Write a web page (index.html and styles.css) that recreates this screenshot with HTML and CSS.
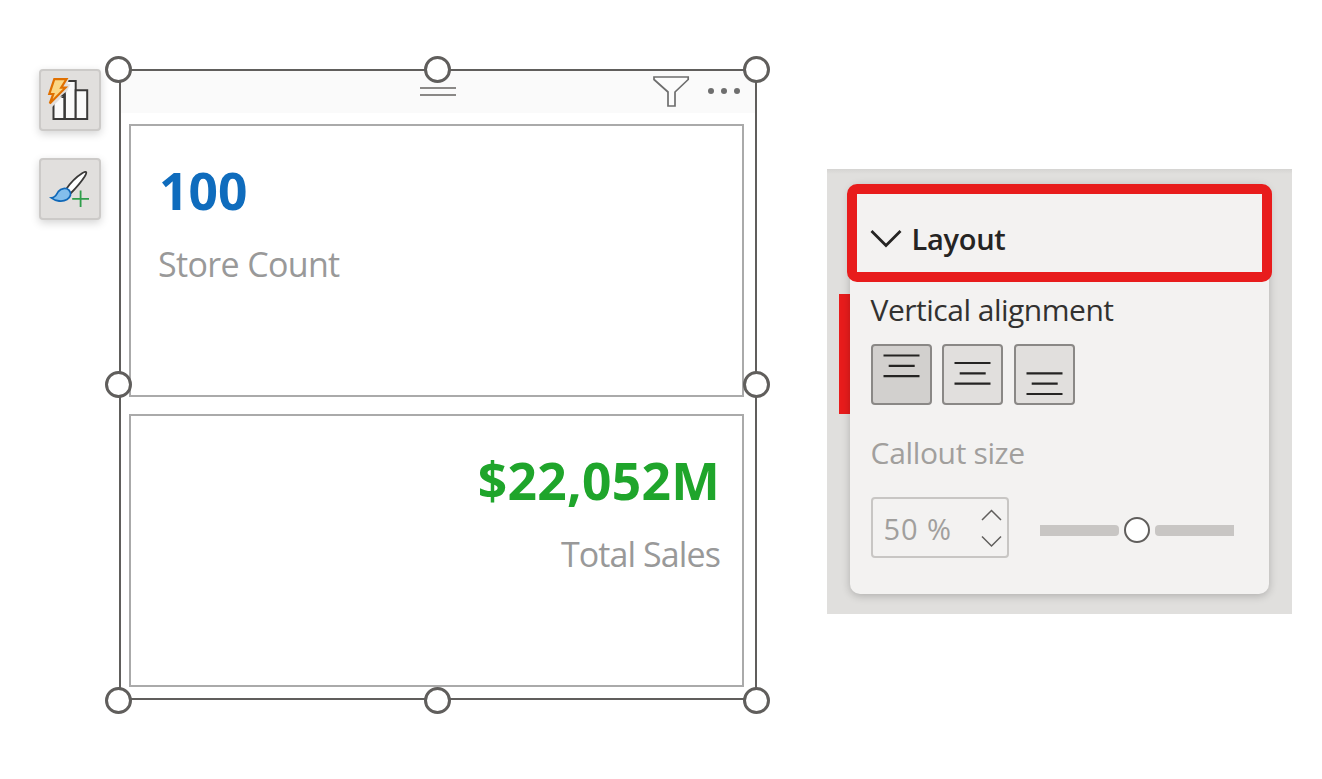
FILE: index.html
```
<!DOCTYPE html>
<html lang="en">
<head>
<meta charset="utf-8">
<title>Card layout</title>
<link rel="stylesheet" href="styles.css">
</head>
<body>
<main class="page">
  <nav class="tools">
    <button class="tool" aria-label="Build visual">
      <svg width="58" height="58" viewBox="41 71 58 58">
        <g fill="#fafafa" stroke="#3b3a39" stroke-width="2">
          <path d="M53.5 97h11.2v22H53.5z"/><path d="M64.700 81h11v38h-11z"/><path d="M75.700 90.300h11.500V119H75.700z"/>
        </g>
        <path d="M50 74h18.500v6.500l-1 3.500h3l-4 8.500-15 15-3-3z" fill="#e1dfdd"/>
        <path d="M65.700 92v26h-2V96.500h-3.500z" fill="#3b3a39"/>
        <path d="M54.300 79.200h12.200l-5.300 8.500h4.300L49.800 103.500l3.500-9.500h-4z" fill="#fbd784" stroke="#e07000" stroke-width="2.200"/>
      </svg>
    </button>
    <button class="tool" aria-label="Format visual">
      <svg width="58" height="58" viewBox="41 160 58 58">
        <path d="M66.300 189C71 182 76.500 176.800 82.500 173q3.300-1.800 3.700-.8q.5 1-1.500 4.300C80.500 183 76 188 70.500 193.500z" fill="#fff" stroke="#3b3a39" stroke-width="1.800"/>
        <path d="M51.300 197.900C56 197.500 56.500 194 58.500 191.300C61 188.300 66 187.300 69 190.200C72 193.500 70.500 197.300 67 199.500C62.500 202.200 55.500 201.300 51.300 197.900z" fill="#83beec" stroke="#1068b8" stroke-width="1.800"/>
        <path d="M80.600 190.500V207M72.200 198.800H89" stroke="#2f9e4b" stroke-width="1.800"/>
      </svg>
    </button>
  </nav>

  <section class="visual">
    <header class="visual-header">
      <span class="grip"></span>
      <svg class="filter" width="38" height="34" viewBox="651 75 38 34">
        <path d="M653 77h34.200v2.500L674 92v14h-7V92L653 79.500z" fill="#fcfcfc" stroke="#6e6e6e" stroke-width="1.700"/>
      </svg>
      <span class="more"><i></i><i></i><i></i></span>
    </header>
    <div class="cards">
      <article class="card">
        <div class="value value-blue">100</div>
        <div class="label">Store Count</div>
      </article>
      <article class="card card-right">
        <div class="value value-green">$22,052M</div>
        <div class="label label-sales">Total Sales</div>
      </article>
    </div>
    <i class="handle top left"></i><i class="handle top center"></i><i class="handle top right"></i>
    <i class="handle middle left"></i><i class="handle middle right"></i>
    <i class="handle bottom left"></i><i class="handle bottom center"></i><i class="handle bottom right"></i>
  </section>

  <aside class="pane">
    <i class="marker"></i>
    <section class="group">
      <header class="group-header">
        <svg width="32" height="20" viewBox="0 0 32 20"><path d="M1.500 2L16 16.500 30.500 2" fill="none" stroke="#252423" stroke-width="2.800"/></svg>
        <span class="group-title">Layout</span>
      </header>
      <div class="group-body">
        <div class="field-name">Vertical alignment</div>
        <div class="align-row">
          <button class="align active" aria-label="Top"><svg width="57" height="57" viewBox="0 0 57 57"><path d="M10.500 9.500h36M15.700 19.800h26M10.500 30.100h36"/></svg></button>
          <button class="align" aria-label="Middle"><svg width="57" height="57" viewBox="0 0 57 57"><path d="M10.500 17h36M15.700 27.300h26M10.500 37.600h36"/></svg></button>
          <button class="align" aria-label="Bottom"><svg width="57" height="57" viewBox="0 0 57 57"><path d="M10.500 27.400h36M15.700 37.700h26M10.500 48h36"/></svg></button>
        </div>
        <div class="field-name field-disabled">Callout size</div>
        <div class="size-row">
          <div class="spinner">
            <span class="percent">50 %</span>
            <svg width="21" height="40" viewBox="0 0 21 40"><path d="M1 12L10.500 2.500 20 12M1 28.500L10.500 38 20 28.500" fill="none" stroke="#605e5c" stroke-width="1.500"/></svg>
          </div>
          <div class="slider"><i class="track track-start"></i><i class="thumb"></i><i class="track track-end"></i></div>
        </div>
      </div>
    </section>
  </aside>
</main>
</body>
</html>
```

FILE: styles.css
```
* { box-sizing: border-box; }
body {
  margin: 0;
  background: #fff;
  font-family: "Open Sans", "Noto Sans", sans-serif;
}
button { margin: 0; padding: 0; font: inherit; }
svg { display: block; flex: none; }
.page {
  display: flex;
  align-items: flex-start;
  width: 1322px;
  height: 779px;
  padding: 69px 0 0 39px;
  overflow: hidden;
}

/* Side tool buttons */
.tools { display: flex; flex-direction: column; gap: 27px; }
.tool {
  width: 62px;
  height: 62px;
  border: 2px solid #cccac8;
  border-radius: 4px;
  background: #e1dfdd;
  box-shadow: 0 3px 8px rgba(0, 0, 0, .17);
}

/* Selected visual */
.visual {
  position: relative;
  width: 638px;
  height: 631px;
  margin-left: 18px;
  border: 2px solid #605e5c;
}
.visual-header {
  display: flex;
  justify-content: flex-end;
  height: 42px;
  background: #fafafa;
}
.grip {
  width: 36px;
  height: 9px;
  margin: 16px 196px 0 0;
  border: solid #8a8886;
  border-width: 2px 0;
}
.filter { margin-top: 4px; }
.more { display: flex; gap: 7px; margin: 17px 15px 0 18px; }
.more i { width: 6px; height: 6px; border-radius: 50%; background: #6e6e6e; }
.cards { display: flex; flex-direction: column; gap: 17px; padding: 11px 11px 0 8px; }
.card { height: 273px; padding: 34px 22px 0 27px; border: 2px solid #aaa; }
.value { font-size: 51.5px; font-weight: 700; line-height: 60px; }
.value-blue { color: #0f6cbd; padding-left: 1px; }
.value-green { color: #1fa52b; letter-spacing: .3px; }
.label { margin-top: 24px; color: #999; font-size: 34px; line-height: 40px; letter-spacing: -.65px; white-space: nowrap; }
.label-sales { letter-spacing: -.9px; }
.card-right { text-align: right; }
.handle {
  position: absolute;
  width: 27px;
  height: 27px;
  border: 3px solid #605e5c;
  border-radius: 50%;
  background: #fff;
}
.top { top: -15px; }
.middle { top: 300px; }
.bottom { bottom: -16px; }
.left { left: -16px; }
.center { left: 303px; }
.right { right: -15px; }

/* Format pane */
.pane {
  position: relative;
  width: 465px;
  height: 445px;
  margin: 100.400px 0 0 69.600px;
  padding: 15px 20px 0 23px;
  background: linear-gradient(#d5d4d2, #e0dfdd 5px);
}
.marker { position: absolute; left: 12px; top: 125px; width: 11px; height: 120px; background: #e81c1c; }
.group {
  position: relative;
  width: 419px;
  height: 410px;
  border-radius: 10px;
  background: #f3f2f1;
  box-shadow: 0 2px 9px rgba(0, 0, 0, .22);
}
.group-header {
  display: flex;
  align-items: center;
  gap: 10px;
  width: 425px;
  height: 98px;
  margin-left: -3px;
  padding: 11px 0 0 13px;
  border: 10px solid #e81c1c;
  border-radius: 10px;
}
.group-title { color: #252423; font-size: 29px; font-weight: 600; line-height: 40px; letter-spacing: -.3px; }
.group-body { padding: 8px 0 0 21px; }
.field-name { color: #323130; font-size: 30px; line-height: 40px; letter-spacing: -.5px; white-space: nowrap; }
.align-row { display: flex; gap: 10.500px; margin: 14px 0 28px; }
.align {
  width: 61px;
  height: 61px;
  border: 2px solid #8a8886;
  border-radius: 4px;
  background: #e1dfdd;
}
.align.active { background: #d2d0ce; }
.align path { stroke: #252423; stroke-width: 2.200; }
.field-disabled { color: #a19f9d; letter-spacing: -.35px; }
.size-row { display: flex; align-items: center; gap: 31px; margin-top: 24px; }
.spinner {
  display: flex;
  align-items: center;
  justify-content: space-between;
  width: 138px;
  height: 61px;
  padding: 0 5px 0 11px;
  border: 2px solid #c8c6c4;
  border-radius: 4px;
}
.percent { padding-top: 3px; color: #a19f9d; font-size: 29px; line-height: 40px; letter-spacing: .9px; white-space: nowrap; }
.slider { display: flex; align-items: center; gap: 5px; margin-top: 5px; }
.track { width: 79px; height: 11px; background: #c8c6c4; }
.track-start { border-radius: 0 4px 4px 0; }
.track-end { border-radius: 4px 0 0 4px; }
.thumb { width: 26px; height: 26px; border: 2px solid #605e5c; border-radius: 50%; background: #fff; }
```
